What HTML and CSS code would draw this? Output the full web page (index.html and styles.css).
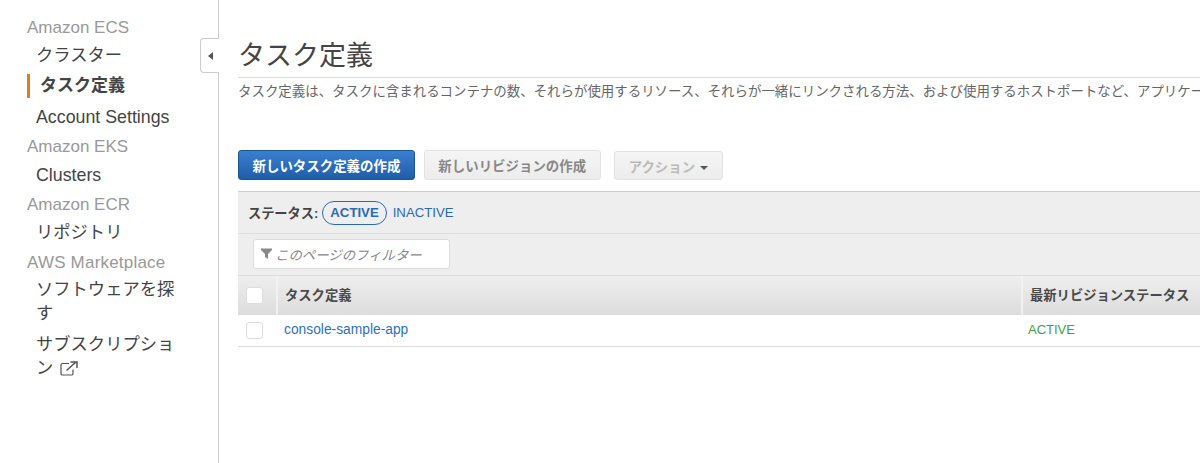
FILE: index.html
```html
<!DOCTYPE html>
<html lang="ja">
<head>
<meta charset="utf-8">
<title>タスク定義</title>
<link rel="stylesheet" href="styles.css">
</head>
<body>
<div class="app">
  <nav class="side">
    <div class="side-head">Amazon ECS</div>
    <a class="side-item">クラスター</a>
    <a class="side-item current">タスク定義</a>
    <a class="side-item latin">Account Settings</a>
    <div class="side-head">Amazon EKS</div>
    <a class="side-item latin">Clusters</a>
    <div class="side-head tight">Amazon ECR</div>
    <a class="side-item">リポジトリ</a>
    <div class="side-head market">AWS Marketplace</div>
    <a class="side-item">ソフトウェアを探す</a>
    <a class="side-item">サブスクリプション
      <svg class="ext" width="18" height="15" viewBox="0 0 18 15"><path d="M9 2.500H2.500A1.500 1.500 0 0 0 1 4V12.500A1.500 1.500 0 0 0 2.500 14H11.500A1.500 1.500 0 0 0 13 12.500V8.500" fill="none" stroke="#555" stroke-width="1.200"/><path d="M6.500 9.500L16 1M10.500 1H17V7" fill="none" stroke="#555" stroke-width="1.500"/></svg>
    </a>
    <button class="collapse" aria-label="折りたたむ"><span class="collapse-arrow"></span></button>
  </nav>
  <main class="main">
    <h1 class="title">タスク定義</h1>
    <p class="desc">タスク定義は、タスクに含まれるコンテナの数、それらが使用するリソース、それらが一緒にリンクされる方法、および使用するホストポートなど、アプリケーションの詳細を指定します。</p>
    <div class="actions">
      <button class="btn primary">新しいタスク定義の作成</button>
      <button class="btn disabled">新しいリビジョンの作成</button>
      <button class="btn disabled faint">アクション<span class="caret"></span></button>
    </div>
    <div class="status-bar">
      <span class="status-label">ステータス:</span>
      <span class="pill">ACTIVE</span>
      <a class="status-link">INACTIVE</a>
    </div>
    <div class="filter-bar">
      <div class="filter">
        <svg class="funnel" width="11" height="11" viewBox="0 0 11 11"><path d="M0 0.500H11V2L7 6V11L4 9V6L0 2Z" fill="#888"/></svg>
        <span>このページのフィルター</span>
      </div>
    </div>
    <div class="thead">
      <div class="cell-check"><span class="check head-check"></span></div>
      <div class="th th-name">タスク定義</div>
      <div class="th th-status">最新リビジョンステータス</div>
    </div>
    <div class="row">
      <div class="cell-check"><span class="check"></span></div>
      <div class="td td-name"><a class="link">console-sample-app</a></div>
      <div class="td td-status">ACTIVE</div>
    </div>
  </main>
</div>
</body>
</html>
```
FILE: styles.css
```css
* { box-sizing: border-box; }
html, body { margin: 0; height: 100%; overflow: hidden; background: #fff; }
body { font-family: "Liberation Sans", "Noto Sans CJK JP", sans-serif; color: #444; }
.app { display: flex; height: 463px; width: 1200px; }

.side { position: relative; flex: 0 0 219px; border-right: 1px solid #ccc; padding: 18px 36px 0 27px; font-size: 17.3px; }
.side-head { color: #999; font-size: 17px; line-height: 20px; margin-top: 8px; }
.side-head:first-child { margin-top: 0; margin-bottom: -1px; }
.side-head.tight { margin-bottom: -1px; }
.side-head.market { margin-top: 9px; margin-bottom: -2px; letter-spacing: 0.2px; }
.side-item { display: block; color: #444; line-height: 24px; margin-top: 7px; padding-left: 9px; }
.side-head + .side-item { margin-top: 6px; }
.side-item.latin { font-size: 17.8px; }
.side-item.current { font-weight: 700; font-size: 17px; border-left: 3px solid #e07b27; padding-left: 10px; }
.ext { vertical-align: -2px; margin-left: 2px; }
.collapse { position: absolute; right: -1px; top: 38px; width: 19px; height: 35px; padding: 0; background: #fff; border: 1px solid #ccc; border-right: 0; border-radius: 4px 0 0 4px; display: flex; align-items: center; justify-content: center; }
.collapse-arrow { width: 0; height: 0; border: 4px solid transparent; border-left-width: 0; border-right: 5px solid #555; }

.main { flex: 1; min-width: 0; padding: 33px 0 0 19px; overflow: hidden; }
.title { margin: 0; padding-top: 2px; font-size: 27px; font-weight: 400; line-height: 42px; color: #444; border-bottom: 1px solid #ddd; }
.desc { margin: 5px 0 0; font-size: 13.45px; line-height: 18px; color: #666; white-space: nowrap; }
.actions { display: flex; margin-top: 49px; align-items: flex-end; }
.btn { height: 30px; padding: 0 13.5px; margin-right: 9px; font: 700 13.45px "Liberation Sans", "Noto Sans CJK JP", sans-serif; border-radius: 3px; border: 1px solid #e2e2e2; }
.primary { color: #fff; background: linear-gradient(#3a7fd0, #1f5da8); border-color: #1b5597; }
.disabled { color: #888; background: linear-gradient(#f5f5f5, #ececec); margin-right: 13px; }
.faint { color: #bbb; height: 29px; padding: 0 14px 0 14px; }
.caret { display: inline-block; border: 4px solid transparent; border-bottom: 0; border-top: 4px solid #555; margin-left: 5px; vertical-align: 2px; }

.status-bar { display: flex; align-items: center; height: 43px; margin-top: 11px; padding-left: 10px; background: #eee; border-top: 1px solid #ccc; border-bottom: 1px solid #ddd; font-size: 13.2px; }
.status-label { font-weight: 700; color: #444; }
.pill { margin-left: 4px; height: 24px; line-height: 22px; padding: 0 7px; border: 1px solid #2a6ab5; border-radius: 12px; color: #2a6ab5; font-weight: 700; }
.status-link { color: #2a6ab5; margin-left: 6px; }
.filter-bar { height: 41px; background: #eee; padding: 5px 0 0 15px; }
.filter { display: flex; align-items: center; gap: 3px; width: 197px; height: 30px; padding-left: 7px; padding-bottom: 1px; background: #fff; border: 1px solid #ddd; border-radius: 3px; font-size: 13.4px; font-style: italic; color: #888; }

.thead { display: flex; height: 40px; background: linear-gradient(#eee, #ddd); border-top: 1px solid #ddd; font-size: 13.3px; font-weight: 700; color: #4a4a4a; }
.cell-check { flex: 0 0 38px; display: flex; align-items: center; padding-left: 8px; }
.check { display: block; width: 17px; height: 17px; background: #fff; border: 1px solid #ddd; border-radius: 3px; }
.th { display: flex; align-items: center; border-left: 2px solid #f1f1f1; padding: 0 0 2px 7px; }
.th-name { flex: 0 0 745px; }
.th-status { flex: 1; }
.row { display: flex; height: 32px; align-items: center; border-bottom: 1px solid #ddd; font-size: 13px; }
.td { padding-bottom: 2px; }
.td-name { flex: 0 0 745px; padding-left: 8px; }
.td-status { color: #3f9f4a; padding-left: 7px; padding-bottom: 3px; }
.link { color: #2f6fbf; font-size: 13.8px; }
```
